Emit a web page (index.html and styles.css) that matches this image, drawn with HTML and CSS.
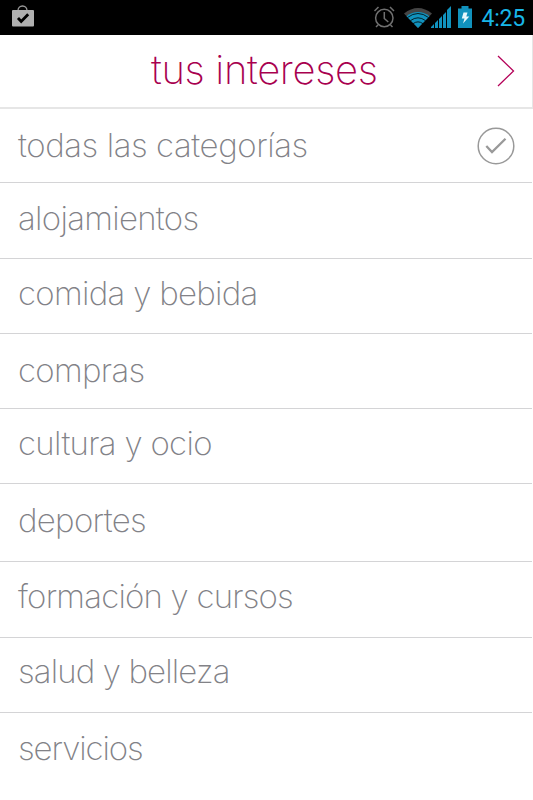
FILE: index.html
```html
<!DOCTYPE html>
<html lang="es">
<head>
  <meta charset="UTF-8">
  <meta name="viewport" content="width=device-width, initial-scale=1">
  <title>tus intereses</title>
  <link rel="stylesheet" href="styles.css">
</head>

<body>

  <!-- Android status bar -->
  <div class="status-bar">
    <svg class="status-bar__bag" width="24" height="24" viewBox="0 0 24 24">
      <path d="M7 7V5.500a4.500 4.500 0 0 1 9 0V7" fill="none" stroke="#999" stroke-width="1.300"/>
      <rect x="1" y="5" width="22" height="16.500" rx="1" fill="#b0b0b0"/>
      <path d="M7 13l3.200 3.500 7-7.300" fill="none" stroke="#000" stroke-width="2.800"/>
    </svg>
    <div class="status-bar__right">
      <svg width="24" height="24" viewBox="0 0 24 24" fill="none" stroke="#707070" stroke-width="1.500">
        <circle cx="11.300" cy="13" r="8.700"/>
        <path d="M11.300 7v6.500l4 3.500M1.500 6l4-4M21 6l-4-4M5 20l-2 2M17.500 20l2 2"/>
      </svg>
      <svg class="status-bar__wifi" width="28" height="22" viewBox="0 0 28 22">
        <path d="M14 21L0 6.500Q14-4.500 28 6.500z" fill="#454545"/>
        <path d="M14 21L2.500 9.200Q14 .8 25.500 9.200z" fill="#1192bd"/>
        <path d="M3.500 10.500Q14 2.500 24.500 10.500M6.500 13.600Q14 8 21.500 13.600M9 16.700Q14 13 19 16.700" fill="none" stroke="#000" stroke-width=".8"/>
      </svg>
      <svg class="status-bar__signal" width="21" height="22" viewBox="0 0 21 22" fill="#1192bd">
        <path d="M0 22v-1l3-3v4zM4 22v-5l3-3v8zM8 22v-9l3-3v12zM12 22V9l3-3v16zM16 22V4l4-4v22z"/>
      </svg>
      <svg class="status-bar__battery" width="14" height="22" viewBox="0 0 14 22">
        <path d="M0 2.500h3.500V0h7v2.500H14V22H0z" fill="#1192bd"/>
        <path d="M5.500 6.500h4l-1.200 4h3L5 17.500l1.500-5H3.800z" fill="#e8f7fc"/>
      </svg>
      <span class="status-bar__time">4:25</span>
    </div>
  </div>

  <!-- Title bar -->
  <header class="header">
    <h1 class="header__title">tus intereses</h1>
    <svg class="header__next" width="20" height="34" viewBox="0 0 20 34">
      <path d="M2 2L17.500 17 2 32" fill="none" stroke="#b40058" stroke-width="1.300"/>
    </svg>
  </header>

  <!-- Categories -->
  <ul class="categories">
    <li class="category category--all">
      <span>todas las categorías</span>
      <svg class="category__check" width="38" height="38" viewBox="0 0 38 38" fill="none" stroke="#999">
        <circle cx="19" cy="19" r="17.800" stroke-width="1.500"/>
        <path d="M9.300 19l5.700 6L28.500 11.700" stroke-width="2.300"/>
      </svg>
    </li>
    <li class="category category--lodging"><span>alojamientos</span></li>
    <li class="category category--food"><span>comida y bebida</span></li>
    <li class="category category--shopping"><span>compras</span></li>
    <li class="category category--culture"><span>cultura y ocio</span></li>
    <li class="category category--sports"><span>deportes</span></li>
    <li class="category category--courses"><span>formación y cursos</span></li>
    <li class="category category--health"><span>salud y belleza</span></li>
    <li class="category category--services"><span>servicios</span></li>
  </ul>

</body>
</html>
```
FILE: styles.css
```css
*, *::before, *::after {
  margin: 0;
  padding: 0;
  box-sizing: border-box;
}
body {
  height: 800px;
  overflow: hidden;
  font-family: Inter, "Liberation Sans", sans-serif;
  font-weight: 200;
  background: #fff;
}

/* ===== Status bar ===== */
.status-bar {
  display: flex;
  justify-content: space-between;
  height: 35px;
  padding: 5px 8px 0 11px;
  background: #000;
}
.status-bar__right {
  display: flex;
  align-items: flex-start;
}
.status-bar__wifi {
  margin: 2px 0 0 7px;
}
.status-bar__signal {
  margin: 1px 0 0 -1px;
}
.status-bar__battery {
  margin: 1px 0 0 6px;
}
.status-bar__time {
  margin-left: 9px;
  font: 400 23px/27px Roboto, sans-serif;
  letter-spacing: -0.2px;
  color: #18b6e8;
}

/* ===== Title bar ===== */
.header {
  display: flex;
  align-items: center;
  height: 74px;
  padding: 0 16px 0 151px;
  border-right: 1px solid #e6e6e6;
  border-bottom: 2px solid #e6e6e6;
}
.header__title {
  margin-top: -2px;
  font-size: 40px;
  font-weight: 200;
  line-height: 48px;
  letter-spacing: -0.35px;
  white-space: nowrap;
  color: #a8004f;
}
.header__next {
  margin-left: auto;
}

/* ===== Category list ===== */
.categories {
  margin-right: 1px;
  list-style: none;
}
.category {
  display: flex;
  justify-content: space-between;
  height: 75px;
  padding: 13px 17px 0 18px;
  border-bottom: 1px solid #d4d4d6;
  font-size: 33px;
  line-height: 40px;
  letter-spacing: -0.7px;
  white-space: nowrap;
  color: #828287;
}
.category--all {
  height: 74px;
  padding-top: 16px;
  letter-spacing: -0.42px;
}
.category--lodging {
  height: 76px;
  padding-top: 15px;
}
.category--food,
.category--culture,
.category--courses {
  padding-top: 14px;
}
.category--shopping,
.category--sports {
  padding-top: 16px;
}
.category--sports {
  height: 78px;
}
.category--courses {
  height: 76px;
  letter-spacing: -0.8px;
}
.category--health {
  letter-spacing: -0.87px;
}
.category--services {
  height: 87px;
  padding-top: 15px;
  border-bottom: 0;
  letter-spacing: -1.1px;
}
.category__check {
  margin-top: 2px;
}
```
